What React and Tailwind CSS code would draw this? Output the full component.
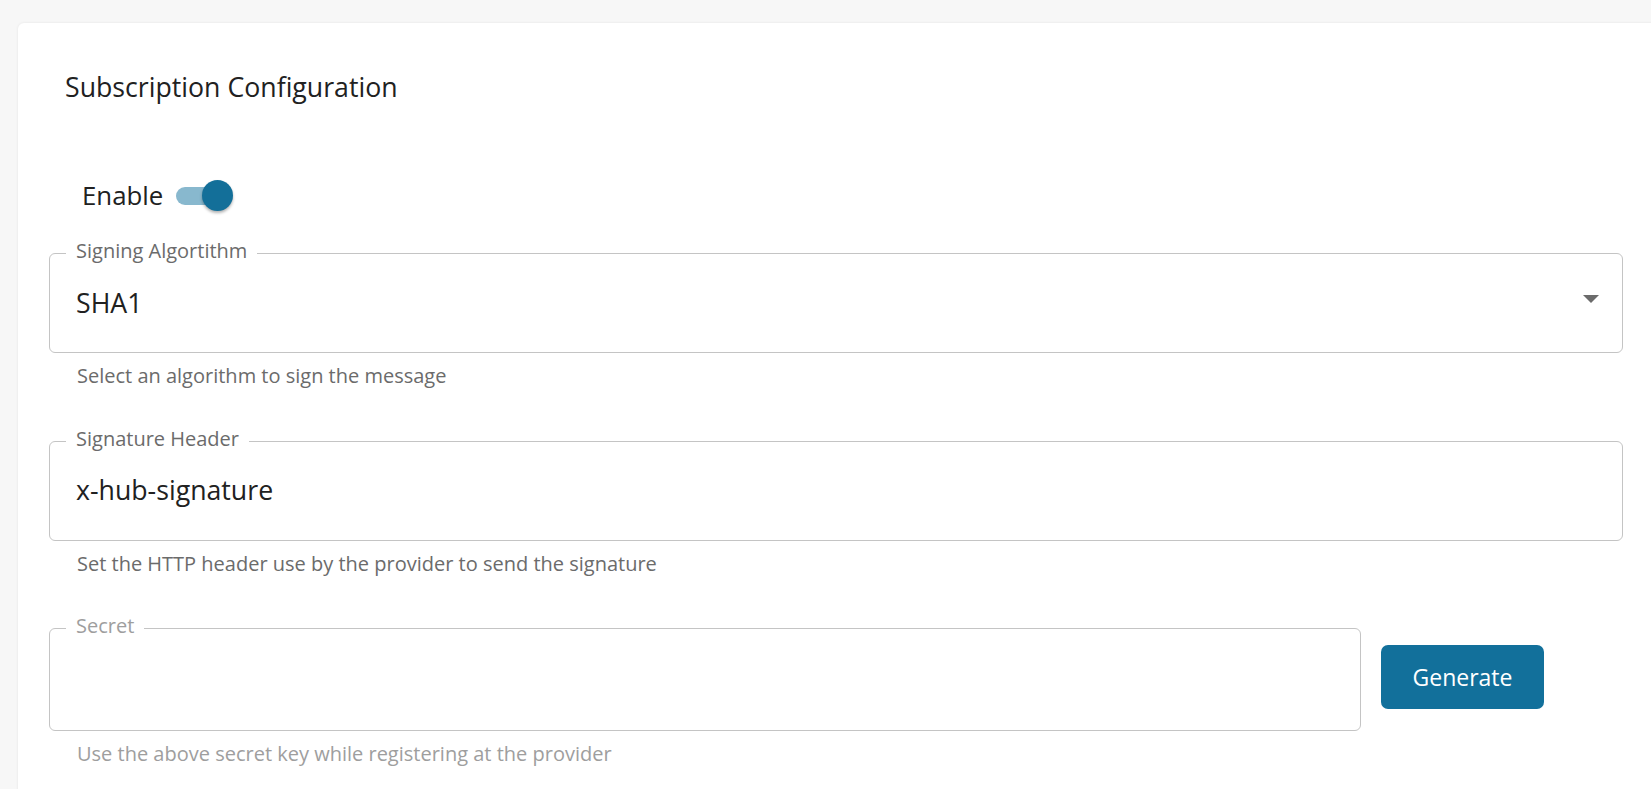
import { useState } from "react";

const Field = ({ label, helper, disabled, className = "", children }) => {
  const labelColor = disabled ? "text-[#9e9e9e]" : "text-[#6b6b6b]";
  return (
    <div className={className}>
      <div className="relative h-[100px] flex items-center border border-[#c4c4c4] rounded-[6px] px-[26px]">
        {/* floating label on the border */}
        <span
          className={`absolute left-[16px] top-[-13px] bg-white px-[10px] text-[20px] leading-none ${labelColor}`}
        >
          {label}
        </span>
        {children}
      </div>
      <p className={`mt-[9px] ml-[28px] text-[20px] leading-[28.8px] ${labelColor}`}>
        {helper}
      </p>
    </div>
  );
};

const App = () => {
  const [enabled, setEnabled] = useState(true);

  return (
    <div
      className="min-h-screen h-[789px] overflow-hidden bg-[#f7f7f7] pt-[23px]"
      style={{ fontFamily: '"Open Sans", "Noto Sans", sans-serif' }}
    >
      <div className="ml-[18px] w-[1700px] min-h-[800px] bg-white rounded-tl-[6px] shadow-[0_0_3px_rgba(0,0,0,0.08)] pl-[31px] pt-[45px]">
        <div className="w-[1574px]">
          {/* Title */}
          <h2 className="ml-[16px] text-[26.7px] leading-[38.4px] text-[#212121] font-normal">
            Subscription Configuration
          </h2>

          {/* Enable switch */}
          <div className="mt-[70px] ml-[33px] flex items-center h-[38.4px]">
            <span className="text-[25.8px] leading-[38.4px] text-[#212121]">Enable</span>
            <button
              className="relative ml-[13px] w-[57px] h-[32px]"
              onClick={() => setEnabled(!enabled)}
            >
              <span
                className={`absolute left-0 top-[7px] w-[52px] h-[18px] rounded-full ${
                  enabled ? "bg-[#88b8ce]" : "bg-[#b8b8b8]"
                }`}
              />
              <span
                className={`absolute top-0 w-[31px] h-[31px] rounded-full shadow-[0_2px_3px_rgba(0,0,0,0.3)] ${
                  enabled ? "right-0 bg-[#136f99]" : "left-0 bg-[#fafafa]"
                }`}
              />
            </button>
          </div>

          {/* Signing Algorithm */}
          <Field
            className="mt-[38px]"
            label="Signing Algortithm"
            helper="Select an algorithm to sign the message"
          >
            <span className="flex-1 text-[26.7px] leading-[38.4px] text-[#212121]">SHA1</span>
            <svg className="mr-[-3px] mb-[8px]" width="16" height="8" viewBox="0 0 16 8">
              <path d="M0 0 L8 8 L16 0 Z" fill="#6b6b6b" />
            </svg>
          </Field>

          {/* Signature Header */}
          <Field
            className="mt-[50px]"
            label="Signature Header"
            helper="Set the HTTP header use by the provider to send the signature"
          >
            <span className="flex-1 text-[26.7px] leading-[38.4px] text-[#212121]">
              x-hub-signature
            </span>
          </Field>

          {/* Secret */}
          <div className="mt-[50px] flex items-start gap-[20px]">
            <div className="w-[1312px]">
              <div className="relative h-[103px] border border-[#c4c4c4] rounded-[6px]">
                <span className="absolute left-[16px] top-[-13px] bg-white px-[10px] text-[20px] leading-none text-[#9e9e9e]">
                  Secret
                </span>
              </div>
              <p className="mt-[9px] ml-[28px] text-[20px] leading-[28.8px] text-[#9e9e9e]">
                Use the above secret key while registering at the provider
              </p>
            </div>
            <button className="mt-[17px] w-[163px] h-[64px] rounded-[7px] bg-[#12709b] text-white text-[23px] leading-none">
              Generate
            </button>
          </div>
        </div>
      </div>
    </div>
  );
};

export default App;
